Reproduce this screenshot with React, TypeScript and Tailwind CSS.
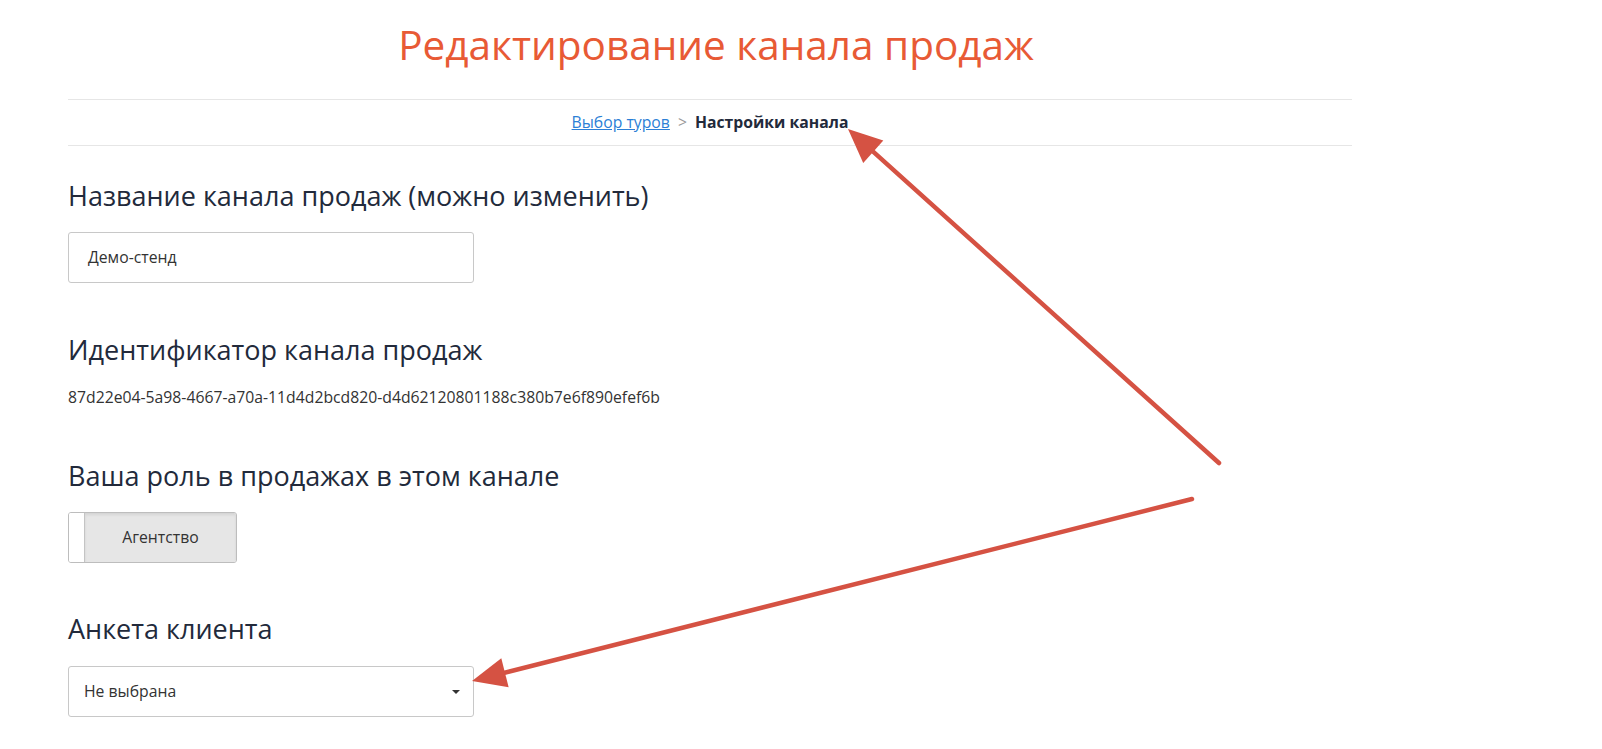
import React from "react";

const font = { fontFamily: '"Open Sans", "Noto Sans", sans-serif' };

// red annotation arrows drawn over the form
const Arrow = ({ x1, y1, x2, y2 }: { x1: number; y1: number; x2: number; y2: number }) => {
	const dx = x1 - x2;
	const dy = y1 - y2;
	const len = Math.hypot(dx, dy);
	const ux = dx / len;
	const uy = dy / len;
	const headLen = 34;
	const half = 15;
	const bx = x2 + ux * headLen;
	const by = y2 + uy * headLen;
	const p1 = `${bx - uy * half},${by + ux * half}`;
	const p2 = `${bx + uy * half},${by - ux * half}`;
	return (
		<g>
			<line x1={x1} y1={y1} x2={x2 + ux * 20} y2={y2 + uy * 20} stroke="#d55243" strokeWidth={4.5} strokeLinecap="round" />
			<polygon points={`${x2},${y2} ${p1} ${p2}`} fill="#d55243" />
		</g>
	);
};

const Heading = ({ children, className = "" }: { children: React.ReactNode; className?: string }) => (
	<h2 className={`text-[27px] leading-[36px] text-[#222a3b] font-normal ${className}`}>{children}</h2>
);

export default function App() {
	return (
		<div className="relative w-[1602px] h-[749px] bg-white overflow-hidden" style={font}>
			<div className="ml-[68px] w-[1284px]">
				<h1 className="pt-[19px] pb-[28px] pl-[12px] text-[40.5px] leading-[52px] text-center text-[#e85a35] font-normal">
					Редактирование канала продаж
				</h1>

				<div className="border-t border-b border-[#e6e6e6] h-[47px] flex items-center justify-center text-[15.75px]">
					<a href="#" className="text-[#2c7fd6] underline">
						Выбор туров
					</a>
					<span className="text-[#9a9a9a] mx-[8px]">&gt;</span>
					<span className="font-bold text-[#222a3b]">Настройки канала</span>
				</div>

				<Heading className="mt-[32px]">Название канала продаж (можно изменить)</Heading>
				<div className="mt-[18px] w-[406px] h-[51px] border border-[#c8c8c8] rounded-[3px] flex items-center px-[19px] text-[15.75px] text-[#333]">
					Демо-стенд
				</div>

				<Heading className="mt-[49px]">Идентификатор канала продаж</Heading>
				<div className="mt-[19px] text-[15.75px] leading-[20px] text-[#333]">
					87d22e04-5a98-4667-a70a-11d4d2bcd820-d4d62120801188c380b7e6f890efef6b
				</div>

				<Heading className="mt-[51px]">Ваша роль в продажах в этом канале</Heading>
				<div className="mt-[18px] w-[169px] h-[51px] border border-[#bdbdbd] rounded-[3px] flex overflow-hidden">
					<div className="w-[16px] bg-white border-r border-[#c4c4c4]" />
					<div className="flex-1 bg-[#e6e6e6] shadow-[inset_0_2px_3px_rgba(0,0,0,0.08)] flex items-center justify-center text-[15.75px] text-[#333]">
						Агентство
					</div>
				</div>

				<Heading className="mt-[48px]">Анкета клиента</Heading>
				<div className="mt-[19px] w-[406px] h-[51px] border border-[#c8c8c8] rounded-[3px] flex items-center justify-between pl-[15px] pr-[13px] text-[15.75px] text-[#333]">
					<span>Не выбрана</span>
					<span className="w-0 h-0 border-l-[4px] border-r-[4px] border-t-[4px] border-l-transparent border-r-transparent border-t-[#333]" />
				</div>
			</div>

			<svg className="absolute inset-0 pointer-events-none" width={1602} height={749}>
				<Arrow x1={1219} y1={463} x2={848} y2={129} />
				<Arrow x1={1192} y1={499} x2={472} y2={681} />
			</svg>
		</div>
	);
}
